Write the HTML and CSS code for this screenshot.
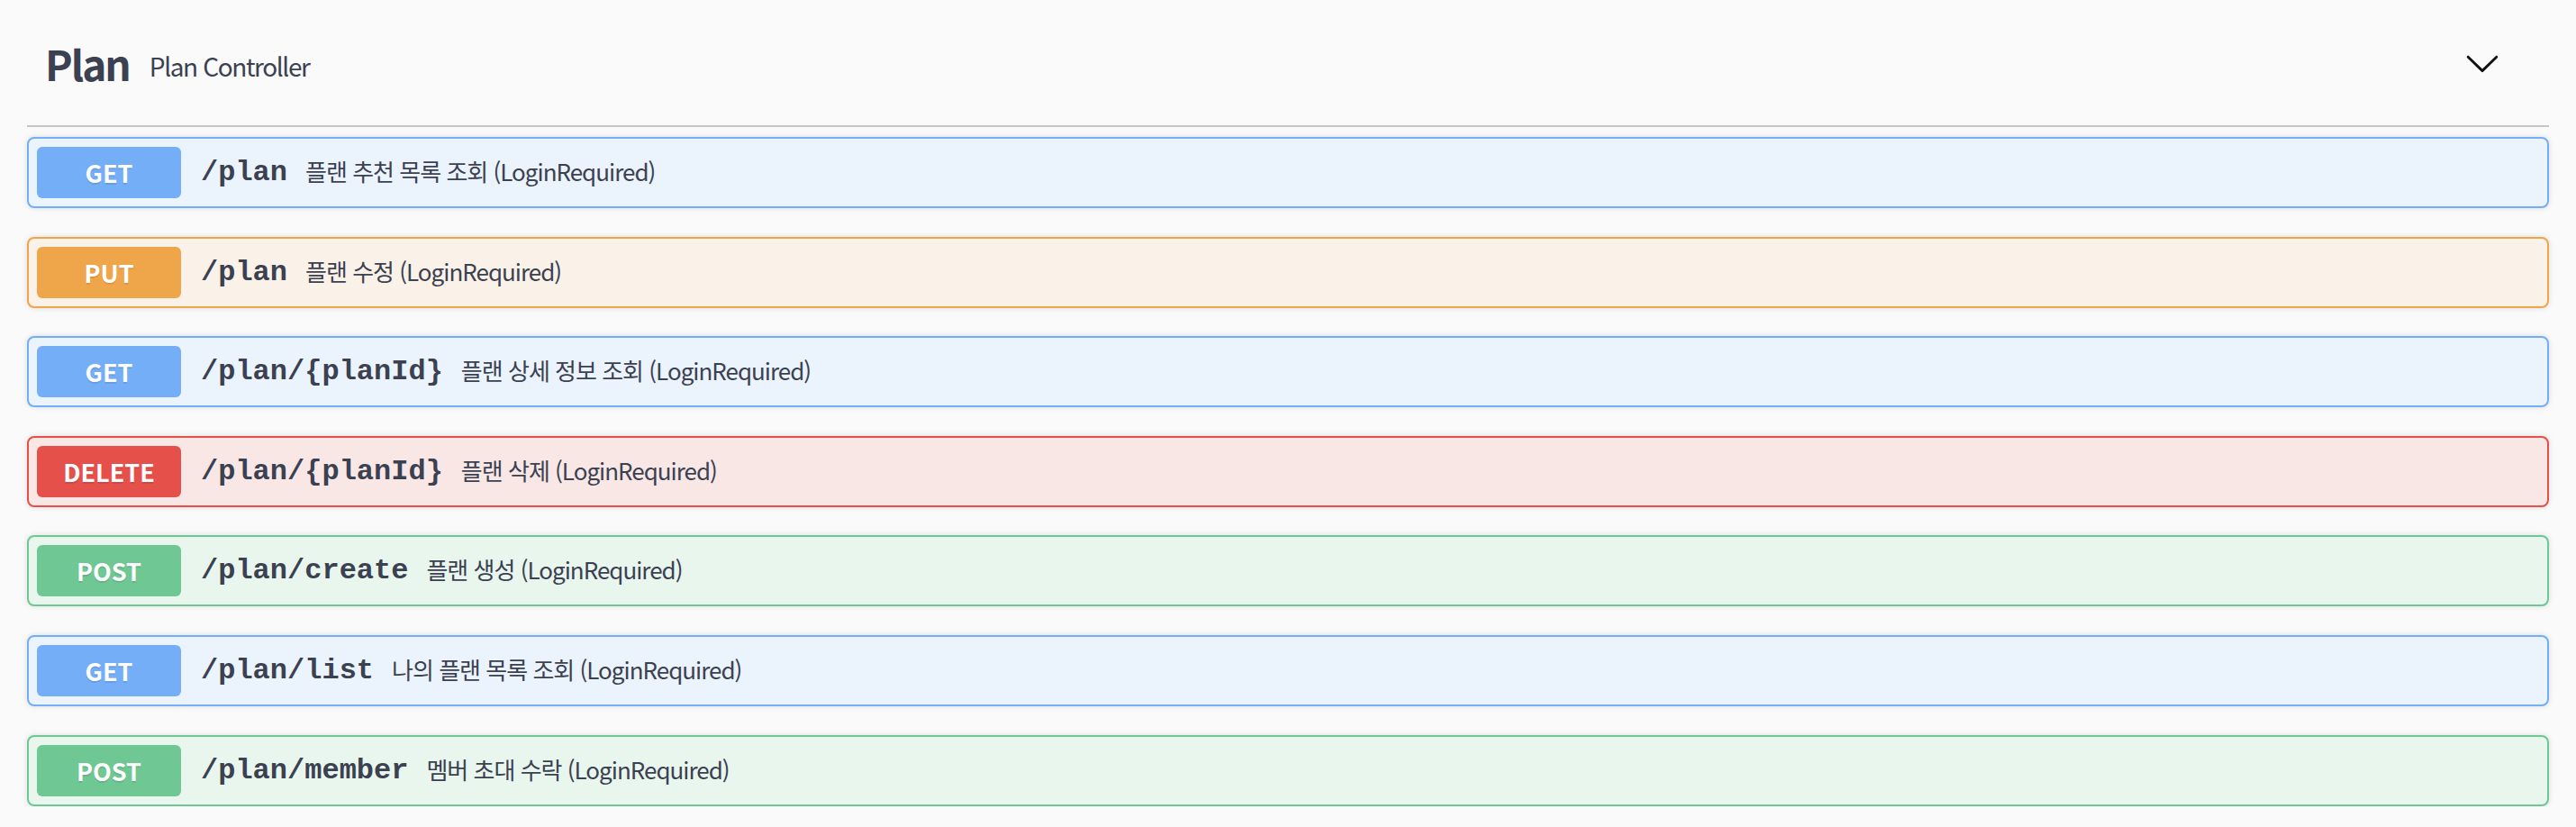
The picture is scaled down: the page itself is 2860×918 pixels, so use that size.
FILE: index.html
```html
<!DOCTYPE html>
<html lang="ko">
<head>
<meta charset="utf-8">
<title>Plan Controller</title>
<link rel="stylesheet" href="styles.css">
</head>
<body>
<div class="wrapper">
  <section class="tag-section">
    <h3 class="tag">
      <span class="tag-name">Plan</span>
      <small class="tag-desc">Plan Controller</small>
      <button class="expand" aria-label="collapse">
        <svg width="40" height="40" viewBox="0 0 20 20" aria-hidden="true"><path d="M17.418 6.109c.272-.268.709-.268.979 0s.271.701 0 .969l-7.908 7.83c-.27.268-.707.268-.979 0l-7.908-7.83c-.27-.268-.27-.701 0-.969.271-.268.709-.268.979 0L10 13.25l7.418-7.141z" fill="#111"/></svg>
      </button>
    </h3>
    <div class="ops">
      <div class="op op-get"><span class="method">GET</span><span class="path">/plan</span><span class="desc">플랜 추천 목록 조회 (LoginRequired)</span></div>
      <div class="op op-put"><span class="method">PUT</span><span class="path">/plan</span><span class="desc">플랜 수정 (LoginRequired)</span></div>
      <div class="op op-get"><span class="method">GET</span><span class="path">/plan/{planId}</span><span class="desc">플랜 상세 정보 조회 (LoginRequired)</span></div>
      <div class="op op-delete"><span class="method">DELETE</span><span class="path">/plan/{planId}</span><span class="desc">플랜 삭제 (LoginRequired)</span></div>
      <div class="op op-post"><span class="method">POST</span><span class="path">/plan/create</span><span class="desc">플랜 생성 (LoginRequired)</span></div>
      <div class="op op-get"><span class="method">GET</span><span class="path">/plan/list</span><span class="desc">나의 플랜 목록 조회 (LoginRequired)</span></div>
      <div class="op op-post"><span class="method">POST</span><span class="path">/plan/member</span><span class="desc">멤버 초대 수락 (LoginRequired)</span></div>
    </div>
  </section>
</div>
</body>
</html>
```
FILE: styles.css
```css
* { box-sizing: border-box; }
html, body {
  margin: 0;
  padding: 0;
  background: #fafafa;
}
body {
  font-family: "Noto Sans CJK KR", "Noto Sans", sans-serif;
  color: #3b4151;
}
.wrapper {
  padding: 0 30px;
}
.tag {
  display: flex;
  align-items: center;
  height: 141px;
  margin: 0 0 11px;
  padding: 0 54px 0 20px;
  border-bottom: 2px solid #c4c5c9;
  font-size: 46px;
  font-weight: 700;
  color: #3b4151;
}
.tag-name {
  line-height: 1;
  letter-spacing: -2px;
}
.tag-desc {
  flex: 1;
  padding: 0 22px;
  font-size: 28px;
  font-weight: 400;
  line-height: 1;
  letter-spacing: -1.4px;
  position: relative;
  top: 3px;
}
.expand {
  display: flex;
  border: 0;
  padding: 0;
  background: none;
  width: 40px;
  height: 40px;
}
.ops {
  display: flex;
  flex-direction: column;
  gap: 31.6px;
}
.op {
  display: flex;
  align-items: center;
  height: 79px;
  padding: 0 9px;
  border: 2px solid;
  border-radius: 8px;
  box-shadow: 0 0 6px rgba(0, 0, 0, 0.12);
}
.method {
  width: 160px;
  height: 57px;
  display: flex;
  align-items: center;
  justify-content: center;
  border-radius: 6px;
  color: #fff;
  font-size: 27px;
  font-weight: 700;
  text-shadow: 0 2px 0 rgba(0, 0, 0, 0.1);
}
.path {
  padding: 0 20px 0 22px;
  font-family: "Liberation Mono", "Courier New", monospace;
  font-size: 32px;
  font-weight: 700;
  color: #3b4151;
}
.desc {
  font-size: 26px;
  letter-spacing: -1px;
  color: #3b4151;
  position: relative;
  top: -2px;
}
.op-get { background: #ebf3fc; border-color: #73aef7; }
.op-get .method { background: #73aef7; }
.op-put { background: #faf2e8; border-color: #efa54a; }
.op-put .method { background: #efa54a; }
.op-delete { background: #f9e7e6; border-color: #e6504a; }
.op-delete .method { background: #e6504a; }
.op-post { background: #e9f6ee; border-color: #6fc794; }
.op-post .method { background: #6fc794; }
```
